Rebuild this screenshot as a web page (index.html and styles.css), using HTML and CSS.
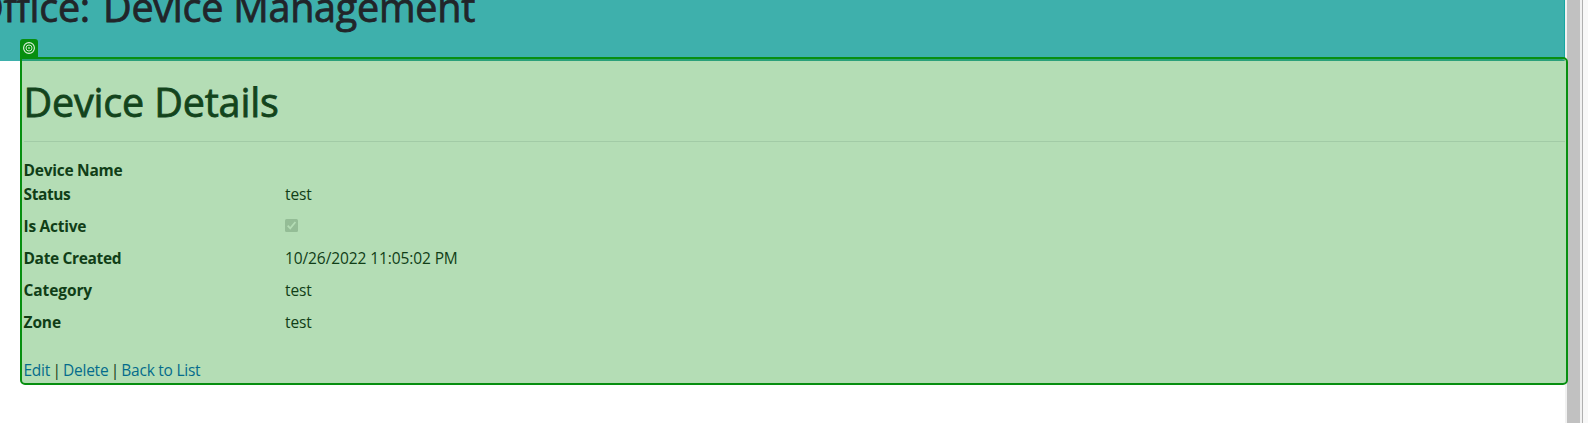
FILE: index.html
```html
<!DOCTYPE html>
<html lang="en">
<head>
<meta charset="utf-8">
<title>Device Details</title>
<link rel="stylesheet" href="styles.css">
</head>
<body>
<div class="page">
  <div class="content">
    <header class="banner"><div class="banner-title"><span class="office">Office:</span> <span class="module">Device Management</span></div></header>
    <main class="details">
      <h1 class="title">Device Details</h1>
      <hr class="rule">
      <dl class="row">
        <dt class="name">Device Name</dt><dd class="empty"></dd>
        <dt class="status">Status</dt><dd class="test">test</dd>
        <dt class="active">Is Active</dt><dd><svg class="check" viewBox="0 0 13 13"><rect width="13" height="13" rx="1.5" fill="#94bd96"/><path d="M2.7 6.7 5.2 9.3 10.4 3" fill="none" stroke="#b4ddb5" stroke-width="1.8"/></svg></dd>
        <dt class="date">Date Created</dt><dd class="stamp">10/26/2022 11:05:02 PM</dd>
        <dt class="category">Category</dt><dd class="test">test</dd>
        <dt class="zone">Zone</dt><dd class="test">test</dd>
      </dl>
      <nav class="links"><a class="edit">Edit</a><span class="bar">|</span><a class="delete">Delete</a><span class="bar">|</span><a class="back">Back to List</a></nav>
    </main>
  </div>
  <div class="scroll"></div>
  <div class="edge"></div>
  <div class="highlight"></div>
  <div class="tab"><svg class="target" viewBox="0 0 12 12" fill="none" stroke="#e0f3df"><circle cx="6" cy="6" r="5.4" stroke-width="1.1"/><circle cx="6" cy="6" r="3" stroke-width=".9"/><circle cx="6" cy="6" r="1" fill="#a5d9a5" stroke="none"/></svg></div>
</div>
</body>
</html>
```
FILE: styles.css
```css
* { box-sizing: border-box; }
body { margin: 0; background: #fff; overflow: hidden; font: 400 16px/24px "Open Sans", "Noto Sans", sans-serif; }
.page { position: relative; display: flex; width: 1588px; height: 423px; overflow: hidden; }
.content { width: 1565px; }
.banner { height: 61px; background: #3eb0ac; border-right: 1px solid #16a6a2; color: #212529; overflow: hidden; }
.banner-title { display: flex; justify-content: flex-end; width: 475px; margin-top: -17px; font-size: 39.5px; line-height: 48px; letter-spacing: -0.25px; -webkit-text-stroke: 0.8px currentColor; white-space: nowrap; gap: 13px; }
.details { position: relative; padding: 17px 0 0 23.5px; color: #103e17; }
.title { margin: 0; font-size: 39.5px; line-height: 48px; font-weight: 400; letter-spacing: -0.17px; -webkit-text-stroke: 0.8px currentColor; color: #13441c; }
.rule { height: 1px; margin: 15px 0 16px; border: 0; background: #a2cba6; }
.row { display: grid; grid-template-columns: 261.5px 1fr; row-gap: 8px; margin: 0; }
.row dt { font-weight: 700; font-size: 15.5px; height: 24px; white-space: nowrap; letter-spacing: -0.25px; }
.row dd { margin: 0; height: 24px; font-size: 15.5px; letter-spacing: -0.1px; }
.row .name, .row .empty { margin-bottom: -8px; }
.row .status { letter-spacing: -0.4px; }
.row .date { letter-spacing: -0.35px; }
.row .category, .row .zone { letter-spacing: -0.1px; }
.check { display: block; width: 13px; height: 13px; margin-top: 5px; }
.links { display: flex; margin-top: 24px; color: #046c8c; font-size: 15.5px; letter-spacing: -0.25px; white-space: nowrap; }
.bar { width: 13px; text-align: center; color: #14401b; }
.scroll { width: 17px; border: solid #f1f1f1; border-width: 0 2px; background: #c1c1c1; }
.edge { width: 6px; background: #f8f8f8; border-left: 1px solid #b0b0b0; }
.highlight { position: absolute; left: 20px; top: 57px; width: 1548px; height: 328px; border: 2px solid #078f10; border-radius: 0 5px 5px 5px; box-shadow: inset -1px 0 0 #b4ddb5; }
.details::before { content: ""; position: absolute; z-index: -1; left: 20px; right: -1px; top: 0; height: 323px; background: #b4ddb5; border-radius: 0 0 0 5px; }
.banner::after { content: ""; position: absolute; left: 22px; top: 59px; width: 1543px; height: 2px; background: #2aa07a; }
.tab { position: absolute; left: 20px; top: 39px; width: 18px; height: 19px; padding: 3px; background: #078f10; border-radius: 3px 3px 0 0; }
.target { display: block; width: 12px; height: 12px; }
```
